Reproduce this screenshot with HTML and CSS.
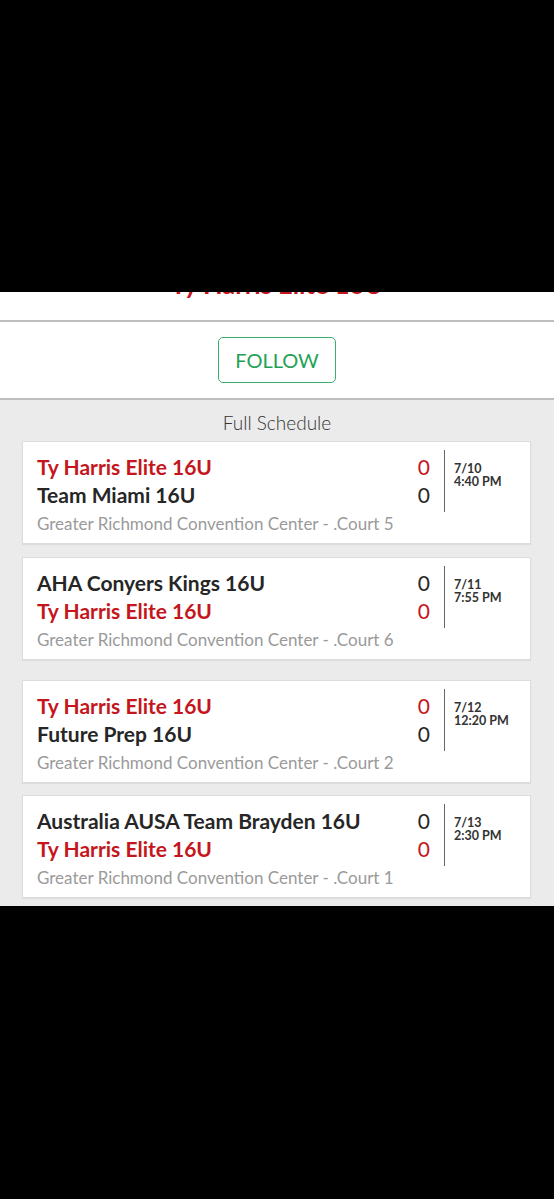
FILE: index.html
```html
<!DOCTYPE html>
<html>
<head>
<meta charset="utf-8">
<link rel="stylesheet" href="styles.css">
</head>
<body>
<div class="top-black"></div>
<header class="team-header">
  <div class="title">Ty Harris Elite 16U</div>
</header>
<section class="follow-bar">
  <button class="follow-btn">FOLLOW</button>
</section>
<main class="schedule">
  <h2 class="schedule-title">Full Schedule</h2>
  <div class="cards">
    <article class="card">
      <div class="teams">
        <div class="team red">Ty Harris Elite 16U</div>
        <div class="team">Team Miami 16U</div>
      </div>
      <div class="scores">
        <div class="score red">0</div>
        <div class="score">0</div>
      </div>
      <div class="when"><span>7/10</span><span>4:40 PM</span></div>
      <div class="venue">Greater Richmond Convention Center - .Court 5</div>
    </article>
    <article class="card">
      <div class="teams">
        <div class="team">AHA Conyers Kings 16U</div>
        <div class="team red">Ty Harris Elite 16U</div>
      </div>
      <div class="scores">
        <div class="score">0</div>
        <div class="score red">0</div>
      </div>
      <div class="when"><span>7/11</span><span>7:55 PM</span></div>
      <div class="venue">Greater Richmond Convention Center - .Court 6</div>
    </article>
    <article class="card card-spaced">
      <div class="teams">
        <div class="team red">Ty Harris Elite 16U</div>
        <div class="team">Future Prep 16U</div>
      </div>
      <div class="scores">
        <div class="score red">0</div>
        <div class="score">0</div>
      </div>
      <div class="when"><span>7/12</span><span>12:20 PM</span></div>
      <div class="venue">Greater Richmond Convention Center - .Court 2</div>
    </article>
    <article class="card card-tight">
      <div class="teams">
        <div class="team">Australia AUSA Team Brayden 16U</div>
        <div class="team red">Ty Harris Elite 16U</div>
      </div>
      <div class="scores">
        <div class="score">0</div>
        <div class="score red">0</div>
      </div>
      <div class="when"><span>7/13</span><span>2:30 PM</span></div>
      <div class="venue">Greater Richmond Convention Center - .Court 1</div>
    </article>
  </div>
</main>
</body>
</html>
```

FILE: styles.css
```css
html {
  background: #000;
}
body {
  margin: 0;
  font-family: Lato, "Open Sans", "Liberation Sans", sans-serif;
  background: #000;
}
.top-black {
  height: 292px;
  background: #000;
}
.team-header {
  height: 28px;
  background: #fff;
  overflow: hidden;
  border-bottom: 2px solid #bdbdbd;
}
.title {
  margin-top: -23px;
  text-align: center;
  color: #c4161c;
  font-size: 25.5px;
  font-weight: 700;
  line-height: 30px;
}
.follow-bar {
  background: #fff;
  height: 76px;
  display: flex;
  justify-content: center;
  align-items: center;
  border-bottom: 2px solid #bdbdbd;
}
.follow-btn {
  width: 118px;
  height: 46px;
  margin-top: -1px;
  background: #fff;
  border: 1.5px solid #3aae68;
  border-radius: 5px;
  color: #22a155;
  font-family: Lato, "Open Sans", sans-serif;
  font-size: 20px;
  font-weight: 400;
  padding: 0;
}
.schedule {
  background: #ebebeb;
  padding: 11px 0 8px;
}
.schedule-title {
  margin: 0 0 6px;
  text-align: center;
  font-size: 19px;
  font-weight: 300;
  line-height: 24px;
  color: #333;
}
.cards {
  display: flex;
  flex-direction: column;
  gap: 13px;
  margin: 0 23px 0 22px;
}
.card {
  background: #fff;
  border: 1px solid #dcdcdc;
  box-shadow: 0 1px 1px rgba(0,0,0,0.06);
  padding: 8px 0 7px;
  display: grid;
  grid-template-columns: 1fr auto 86px;
  grid-template-rows: 62px 24px;
}
.card-spaced {
  margin-top: 7px;
}
.card-tight {
  margin-top: -1px;
}
.teams {
  padding: 3px 0 3px 14px;
}
.team {
  height: 28px;
  line-height: 28px;
  font-size: 21px;
  font-weight: 700;
  color: #262626;
  white-space: nowrap;
}
.red {
  color: #c4161c;
}
.scores {
  padding: 3px 0;
  text-align: right;
  margin-right: 14px;
}
.score {
  height: 28px;
  line-height: 28px;
  font-size: 21px;
  font-weight: 400;
  color: #262626;
}
.score.red {
  color: #c4161c;
}
.when {
  border-left: 1.5px solid #666;
  padding: 12px 0 0 9px;
  display: flex;
  flex-direction: column;
  font-size: 12.5px;
  font-weight: 700;
  line-height: 13px;
  color: #333;
}
.venue {
  grid-column: 1 / 4;
  padding-left: 14px;
  font-size: 17px;
  line-height: 24px;
  color: #9a9a9a;
  white-space: nowrap;
}
```
